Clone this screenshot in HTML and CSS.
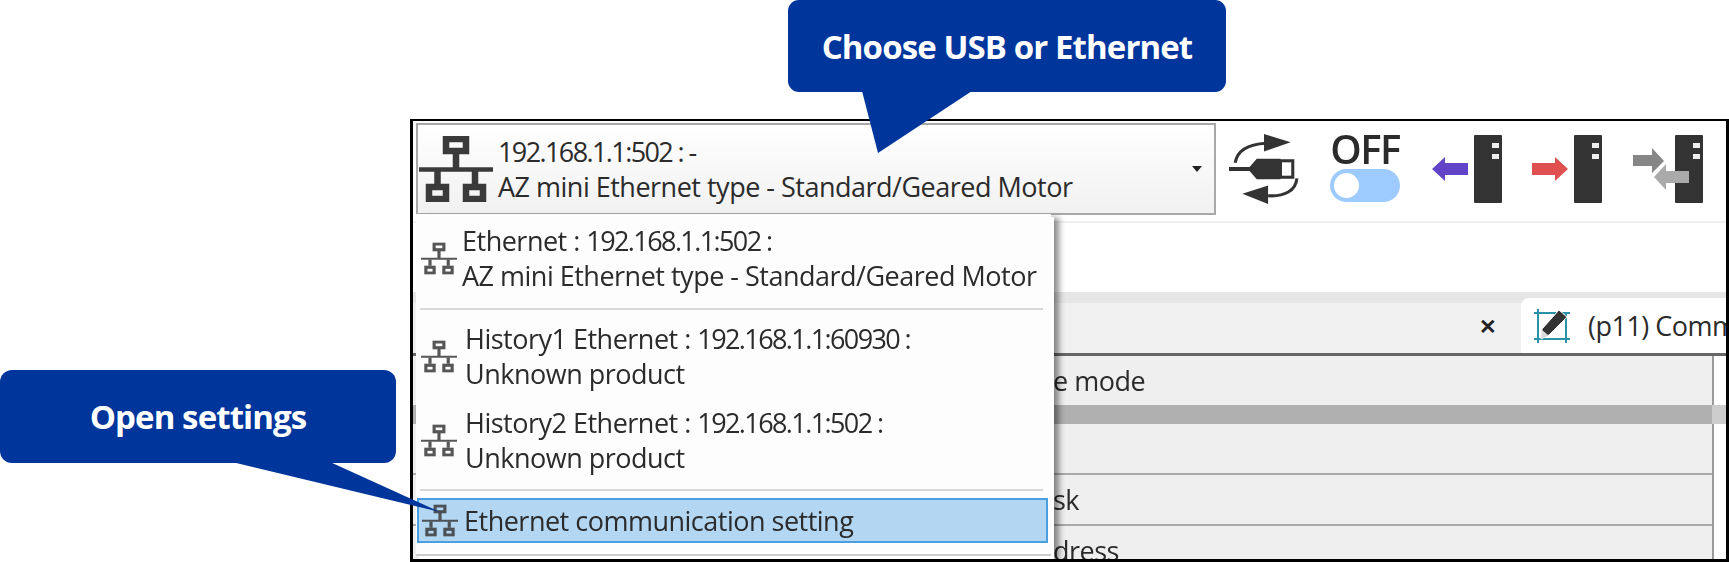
FILE: index.html
```html
<!DOCTYPE html>
<html lang="en">
<head>
<meta charset="UTF-8">
<meta name="viewport" content="width=device-width, initial-scale=1.0">
<title>Ethernet connection</title>
<link rel="stylesheet" href="styles.css">
</head>
<body>
<div class="frame">
  <div class="app">
    <div class="toolbar">
      <div class="combo">
        <svg class="net-big" viewBox="0 0 74 66"><use href="#net"/></svg>
        <div class="combo-text">
          <div><span class="ip">192.168.1.1:502 : -</span></div>
          <div>AZ mini Ethernet type - Standard/Geared Motor</div>
        </div>
        <span class="caret"></span>
      </div>
      <svg class="usb" viewBox="0 0 70 70">
        <path d="M6 29 C8 17 18 11 36 10" fill="none" stroke="#333" stroke-width="3"/>
        <path d="M34 1 L60 9 L34 18 Z" fill="#333"/>
        <path d="M0 33 H20 L27 25 H50 V45 H27 L20 37 H0 Z" fill="#333"/>
        <rect x="50" y="27" width="12" height="16" fill="#fff" stroke="#333" stroke-width="3"/>
        <path d="M66 44 C65 56 54 62 38 61" fill="none" stroke="#333" stroke-width="3"/>
        <path d="M38 51 L13 59 L38 69 Z" fill="#333"/>
      </svg>
      <div class="off">
        <div class="off-label">OFF</div>
        <div class="switch"><span class="knob"></span></div>
      </div>
      <div class="device">
        <svg class="arrow" viewBox="0 0 36 24"><path d="M0 12 L13 0 V6 H36 V18 H13 V24 Z" fill="#6144c8"/></svg>
        <div class="tower"><i></i><i></i></div>
      </div>
      <div class="device">
        <svg class="arrow" viewBox="0 0 36 24"><path d="M36 12 L23 0 V6 H0 V18 H23 V24 Z" fill="#e05050"/></svg>
        <div class="tower"><i></i><i></i></div>
      </div>
      <div class="device device-both">
        <div class="tower"><i></i><i></i></div>
        <svg class="arrows" viewBox="0 0 56 42">
          <path d="M31 13 L19 0 V7 H0 V18 H19 V25 Z" fill="#868686"/>
          <path d="M21 29 L33 16 V23 H56 V35 H33 V42 Z" fill="#aaa"/>
        </svg>
      </div>
    </div>
    <div class="blank"></div>
    <div class="tabs">
      <span class="tab-close">&#10005;</span>
      <div class="tab">
        <svg class="tab-icon" viewBox="0 0 36 34">
          <path d="M4 0 V34 M0 30 H36 M0 4 H36 M32 4 V34" fill="none" stroke="#2b93a8" stroke-width="2"/>
          <path d="M25 1 L33 8 L15 26 L7 30 L8 20 Z" fill="#333" stroke="#fff" stroke-width="1"/>
          <path d="M8 21 L14 26 L7 30 Z" fill="#ddd"/>
        </svg>
        <span class="tab-title">(p11) Comm</span>
      </div>
    </div>
    <div class="grid">
      <div class="row row-head"><span>e mode</span></div>
      <div class="row row-bar"></div>
      <div class="row row-empty"></div>
      <div class="row row-task"><span>sk</span></div>
      <div class="row row-addr"><span>dress</span></div>
    </div>
  </div>

  <div class="peek"></div>
  <div class="menu">
    <div class="item item-first">
      <svg class="net" viewBox="0 0 74 66"><use href="#net"/></svg>
      <div class="item-text">
        <div>Ethernet : <span class="ip">192.168.1.1:502 :</span></div>
        <div>AZ mini Ethernet type - Standard/Geared Motor</div>
      </div>
    </div>
    <div class="sep"></div>
    <div class="item item-hist">
      <svg class="net" viewBox="0 0 74 66"><use href="#net"/></svg>
      <div class="item-text">
        <div>History1 Ethernet : <span class="ip">192.168.1.1:60930 :</span></div>
        <div>Unknown product</div>
      </div>
    </div>
    <div class="item item-hist">
      <svg class="net" viewBox="0 0 74 66"><use href="#net"/></svg>
      <div class="item-text">
        <div>History2 Ethernet : <span class="ip">192.168.1.1:502 :</span></div>
        <div>Unknown product</div>
      </div>
    </div>
    <div class="sep sep-low"></div>
    <div class="item item-active">
      <svg class="net" viewBox="0 0 74 66"><use href="#net"/></svg>
      <div class="item-text">
        <div>Ethernet communication setting</div>
      </div>
    </div>
  </div>
</div>

<div class="callout callout-top">Choose USB or Ethernet</div>
<svg class="tail tail-top" viewBox="0 0 110 63"><path d="M0 0 L16 62 L110 0 Z"/></svg>
<div class="callout callout-left">Open settings</div>
<svg class="tail tail-left" viewBox="0 0 208 52"><path d="M0 0 L208 50 L98 0 Z"/></svg>

<svg class="defs" width="0" height="0">
  <symbol id="net" viewBox="0 0 74 66">
    <g fill="none" stroke="#3a3a3a" stroke-width="6.5">
      <rect x="27" y="3" width="20" height="12"/>
      <path d="M37 16 V32"/>
      <path d="M0 33.5 H74" stroke-width="4.5"/>
      <path d="M18.5 35 V48 M56 35 V48"/>
      <rect x="10" y="51" width="17" height="12"/>
      <rect x="47" y="51" width="17" height="12"/>
    </g>
  </symbol>
</svg>
</body>
</html>
```

FILE: styles.css
```css
html, body {
    margin: 0;
    height: 562px;
    overflow: hidden;
    background: #fff;
}
body {
    position: relative;
    font-family: 'Open Sans', sans-serif;
    padding: 119px 0 0 410px;
    box-sizing: border-box;
}
.defs { position: absolute; }

.frame {
    position: relative;
    width: 1319px;
    height: 443px;
    box-sizing: border-box;
    border: 3px solid #000;
    border-top-width: 2px;
    background: #fff;
    overflow: hidden;
}
.app {
    height: 100%;
    display: flex;
    flex-direction: column;
    filter: blur(.6px);
    color: #2b2b2b;
    font-size: 27px;
    letter-spacing: -.5px;
}
.ip { letter-spacing: -1.6px; }

/* toolbar */
.toolbar {
    flex: none;
    height: 102px;
    padding: 2px 0 0 3px;
    box-sizing: border-box;
    display: flex;
    align-items: flex-start;
    border-bottom: 2px solid #efefef;
}
.combo {
    width: 800px;
    height: 92px;
    box-sizing: border-box;
    border: 2px solid #a8a8a8;
    background: linear-gradient(#fff, #f1f1f1);
    display: flex;
    align-items: center;
    padding: 0 12px 0 1px;
}
.net-big { width: 74px; height: 66px; margin: 0 5px 0 0; flex: none; }
.combo-text { flex: 1; line-height: 35px; white-space: nowrap; margin-top: -1px; }
.caret {
    width: 0;
    height: 0;
    border: 5px solid transparent;
    border-top: 6px solid #222;
    border-bottom: 0;
}
.usb { width: 72px; height: 72px; margin: 10px 0 0 13px; flex: none; }
.off { width: 70px; margin: 7px 0 0 29px; flex: none; }
.off-label {
    font-size: 40px;
    font-weight: 600;
    line-height: 37px;
    letter-spacing: -1.5px;
    text-align: center;
}
.switch {
    height: 33px;
    margin-top: 2px;
    border-radius: 17px;
    background: #9ecbff;
    display: flex;
    align-items: center;
    padding-left: 4px;
}
.knob {
    width: 25px;
    height: 25px;
    border-radius: 50%;
    background: #fff;
}
.device {
    position: relative;
    display: flex;
    align-items: center;
    gap: 6px;
    margin: 12px 0 0 32px;
    flex: none;
}
.device + .device { margin-left: 30px; }
.device + .device-both { margin-left: 31px; width: 70px; justify-content: flex-end; }
.arrow { width: 36px; height: 24px; }
.tower {
    width: 28px;
    height: 68px;
    background: #333;
    border-radius: 1px;
    display: flex;
    flex-direction: column;
    align-items: flex-end;
    gap: 6px;
    padding: 8px 3px 0 0;
    box-sizing: border-box;
}
.tower i { width: 7px; height: 5px; background: #eee; }
.arrows { position: absolute; left: 0; top: 13px; width: 56px; height: 42px; }

.blank { flex: none; height: 69px; background: #fff; }

/* tab strip */
.tabs {
    flex: none;
    height: 64px;
    box-sizing: border-box;
    position: relative;
    background: #f0f0f0;
    border-top: 11px solid #e6e6e6;
    border-bottom: 3px solid #666;
    display: flex;
    justify-content: flex-end;
    align-items: stretch;
}
.tab-close {
    align-self: center;
    margin: 0 24px 4px 0;
    font-size: 21px;
    font-weight: 700;
    letter-spacing: 0;
    color: #222;
}
.tab {
    width: 205px;
    margin-top: -5px;
    background: #fff;
    border-radius: 8px 0 0 0;
    display: flex;
    align-items: center;
    padding-left: 13px;
    overflow: hidden;
    white-space: nowrap;
    box-sizing: border-box;
}
.tab-icon { width: 36px; height: 34px; flex: none; margin-right: 18px; }

/* table behind the dropdown */
.grid {
    flex: 1;
    min-height: 0;
    margin-right: 12px;
    background: #efefef;
    border-right: 2px solid #999;
    display: flex;
    flex-direction: column;
}
.row {
    flex: none;
    padding-left: 640px;
    box-sizing: border-box;
    display: flex;
    align-items: center;
    border-bottom: 2px solid #aaa;
}
.row-head { height: 49px; border-bottom: 0; }
.row-bar { height: 19px; background: #b0b0b0; border-bottom: 0; box-shadow: 16px 0 0 #ccc; }
.row-empty { height: 51px; }
.row-task { height: 51px; }
.row-addr { flex: 1 1 0; min-height: 0; border-bottom: 0; align-items: flex-start; padding-top: 6px; }

/* dropdown */
.menu {
    position: absolute;
    left: 3px;
    top: 93px;
    width: 635px;
    height: 342px;
    box-sizing: border-box;
    background: #fdfdfd;
    border-bottom: 2px solid #ccc;
    box-shadow: 3px 3px 0 #fff, 8px 4px 6px rgba(0,0,0,.45);
    filter: blur(.6px);
    color: #2b2b2b;
    font-size: 27px;
    letter-spacing: -.5px;
    white-space: nowrap;
}
.peek {
    position: absolute;
    left: 10px;
    bottom: 0;
    width: 570px;
    height: 3px;
    background: repeating-linear-gradient(90deg, #777 0 9px, #eee 9px 13px);
    filter: blur(.6px);
}
.item { display: flex; align-items: center; }
.net { width: 36px; height: 35px; flex: none; margin-right: 5px; opacity: .85; }
.item-text { line-height: 35px; }
.item-first { padding: 9px 0 0 5px; }
.item-hist { padding: 0 0 0 5px; margin-bottom: 14px; }
.item-hist .net { margin-right: 8px; }
.sep { height: 2px; margin: 15px 8px 11px 4px; background: #d8d8d8; }
.sep-low { margin: 8px 8px 7px 4px; }
.item-active {
    height: 45px;
    margin: 0 3px 0 1px;
    padding-left: 3px;
    box-sizing: border-box;
    background: #b3d7f3;
    border: 2px solid #4a9fe0;
}
.item-active .net { margin-right: 6px; }

/* blue callouts */
.callout {
    position: absolute;
    box-sizing: border-box;
    display: flex;
    align-items: center;
    justify-content: center;
    background: #00359c;
    color: #fff;
    font-weight: 700;
    font-size: 33px;
    letter-spacing: -.9px;
    z-index: 2;
}
.callout-top { left: 788px; top: 0; width: 438px; height: 92px; border-radius: 11px; }
.callout-left { left: 0; top: 370px; width: 396px; height: 93px; border-radius: 12px; }
.tail { position: absolute; fill: #00359c; z-index: 2; }
.tail-top { left: 862px; top: 91px; width: 110px; height: 63px; }
.tail-left { left: 232px; top: 462px; width: 208px; height: 52px; }
```
